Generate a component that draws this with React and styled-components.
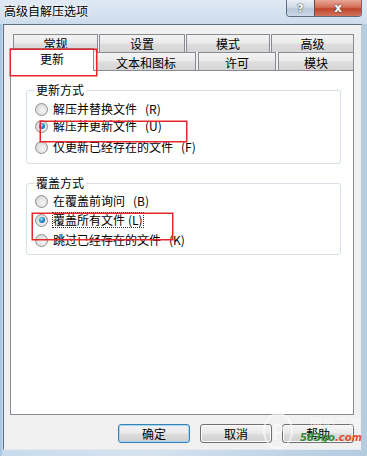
import React from "react";
import styled, { createGlobalStyle } from "styled-components";

const Global = createGlobalStyle`
    html, body {
        margin: 0;
        padding: 0;
        background: #2c3c4a;
    }
    body {
        font-family: "Noto Sans CJK SC", "Liberation Sans", sans-serif;
        font-size: 12px;
        color: #000;
    }
`;

const Window = styled.div`
    position: relative;
    width: 367px;
    height: 456px;
    display: flex;
    flex-direction: column;
    background: linear-gradient(90deg, #9fbfdc 0px, #c9dbec 3px, #d6e3ef 40%, #c4d6e8 70%, #b5cbe0 100%);
    overflow: hidden;
`;

const TitleBar = styled.div`
    height: 24px;
    display: flex;
    justify-content: space-between;
    align-items: flex-start;
    padding-left: 4px;
    padding-right: 5px;
    background: linear-gradient(180deg, #dfe9f4 0%, #cddcec 100%);
`;

const Title = styled.div`
    padding-top: 3px;
    font-size: 12px;
    line-height: 16px;
    color: #000;
    text-shadow: 0 0 6px #fff, 0 0 3px #fff;
`;

const Caption = styled.div`
    display: flex;
    height: 16px;
    border: 1px solid #5a6e85;
    border-top: none;
    border-radius: 0 0 4px 4px;
    overflow: hidden;
`;

const CapButton = styled.div`
    width: ${p => p.$w}px;
    height: 16px;
    display: flex;
    align-items: center;
    justify-content: center;
    font-family: "DejaVu Sans", sans-serif;
    font-weight: bold;
    font-size: ${p => (p.$close ? 12 : 11)}px;
    color: #fff;
    text-shadow: 0 0 1px #333, 0 0 2px #555;
    border-left: ${p => (p.$close ? "1px solid #6b4a4a" : "none")};
    background: ${p =>
        p.$close
            ? "linear-gradient(180deg, #e8a797 0%, #d4705a 45%, #c0432a 55%, #d0755e 100%)"
            : "linear-gradient(180deg, #e9eff6 0%, #cfdbe8 45%, #b8c9dc 55%, #cad8e7 100%)"};
`;

const Client = styled.div`
    flex: 1;
    margin: 0 5px 6px 3px;
    background: #f0f0f0;
    border: 1px solid #5d6f80;
    border-right-color: #b9c8d6;
    border-bottom-color: #e6eaee;
    display: flex;
    flex-direction: column;
    padding: 9px 7px 0 6px;
`;

const Tabs = styled.div`
    position: relative;
    width: 344px;
    display: flex;
    flex-direction: column;
`;

const TabRow = styled.div`
    display: flex;
    align-items: flex-end;
    gap: ${p => p.$gap}px;
    padding-left: ${p => p.$pad}px;
    height: 18px;
`;

const Tab = styled.div`
    width: ${p => p.$w}px;
    height: 18px;
    box-sizing: border-box;
    border: 1px solid #898c95;
    border-bottom: none;
    display: flex;
    align-items: ${p => (p.$back ? "flex-start" : "center")};
    justify-content: center;
    font-size: 12px;
    line-height: 13px;
    padding-top: ${p => (p.$back ? 2 : 1)}px;
    background: linear-gradient(180deg, #f3f3f3 0%, #ebebeb 45%, #dddddd 55%, #d5d5d5 100%);
`;

const ActiveTab = styled(Tab)`
    height: 23px;
    margin-bottom: -1px;
    position: relative;
    z-index: 2;
    background: #fff;
    padding-top: 0;
    padding-bottom: 3px;
`;

const Panel = styled.div`
    height: 345px;
    box-sizing: border-box;
    background: #fff;
    border: 1px solid #898c95;
    padding: 12px 12px 0 15px;
    display: flex;
    flex-direction: column;
    gap: 12px;
`;

const Group = styled.fieldset`
    margin: 0;
    padding: 0 0 0 8px;
    border: 1px solid #d5dfe5;
    border-radius: 3px;
    height: ${p => p.$h}px;
    box-sizing: border-box;
`;

const Legend = styled.legend`
    padding: 0 2px;
    margin-left: -1px;
    font-size: 12px;
    line-height: 14px;
`;

const Option = styled.label`
    display: flex;
    align-items: center;
    gap: 5px;
    height: 14px;
    margin-top: ${p => p.$top}px;
    font-size: 12px;
    line-height: 14px;
    white-space: nowrap;
`;

const Radio = styled.span`
    width: 13px;
    height: 13px;
    flex: none;
    border-radius: 50%;
    border: 1px solid #8e8f8f;
    box-sizing: border-box;
    background: radial-gradient(circle at 60% 60%, #f6f6f6 0%, #e0e0e0 55%, #cbcbcb 100%);
    display: flex;
    align-items: center;
    justify-content: center;
    &::after {
        content: "";
        display: ${p => (p.$on ? "block" : "none")};
        width: 6px;
        height: 6px;
        border-radius: 50%;
        background: radial-gradient(circle at 40% 35%, #9fdcff 0%, #1a7ec8 55%, #0b4f8a 100%);
    }
`;

const Key = styled.span`
    margin-left: 3px;
    font-size: 12px;
`;

const Focus = styled.span`
    outline: 1px dotted #333;
    outline-offset: 0px;
`;

const Buttons = styled.div`
    display: flex;
    justify-content: flex-end;
    gap: 10px;
    width: 344px;
    margin-top: 9px;
`;

const Button = styled.div`
    width: 72px;
    height: 19px;
    box-sizing: border-box;
    border: 1px solid ${p => (p.$default ? "#3c7fb1" : "#707070")};
    box-shadow: ${p => (p.$default ? "inset 0 0 0 1px #9fd7f6" : "inset 0 0 0 1px #fbfbfb")};
    border-radius: 3px;
    display: flex;
    align-items: center;
    justify-content: center;
    font-size: 12px;
    line-height: 14px;
    background: linear-gradient(180deg, #f2f2f2 0%, #ebebeb 45%, #dddddd 55%, #cfcfcf 100%);
`;

const Mark = styled.div`
    position: absolute;
    border: 1px solid #e8262a;
    box-shadow: 0 0 0 0.5px #e8262a;
    pointer-events: none;
    z-index: 5;
`;

const Watermark = styled.div`
    position: absolute;
    right: 5px;
    bottom: 12px;
    z-index: 6;
    display: flex;
    flex-direction: column;
    align-items: flex-end;
    gap: 3px;
    font-family: "DejaVu Sans", sans-serif;
    font-style: italic;
    font-weight: bold;
    line-height: 12px;
    pointer-events: none;
`;

const WmTop = styled.span`
    font-family: "Noto Sans CJK SC", sans-serif;
    font-style: normal;
    font-weight: normal;
    font-size: 12px;
    color: rgba(255, 255, 255, 0.6);
    letter-spacing: 1px;
`;

const WmSite = styled.span`
    font-size: 10px;
    color: #2f8f3a;
    & > em {
        color: #e0502e;
        font-style: italic;
    }
`;

const Logo = () => (
    <svg width="32" height="38" viewBox="0 0 32 38" style={{ position: "absolute", left: 262, top: 412, zIndex: 6 }}>
        <ellipse cx="16" cy="19" rx="14" ry="17" fill="none" stroke="rgba(255,255,255,0.6)" strokeWidth="2" />
        <path d="M13 11 v17 M13 13 h3 a4 4 0 0 1 0 8 h-3" fill="none" stroke="rgba(255,255,255,0.6)" strokeWidth="2" />
    </svg>
);

export default function App() {
    return (
        <Window>
            <Global />
            <TitleBar>
                <Title>高级自解压选项</Title>
                <Caption>
                    <CapButton $w={27}>?</CapButton>
                    <CapButton $w={46} $close>x</CapButton>
                </Caption>
            </TitleBar>
            <Client>
                <Tabs>
                    <TabRow $pad={3} $gap={1}>
                        <Tab $w={85} $back>常规</Tab>
                        <Tab $w={86} $back>设置</Tab>
                        <Tab $w={84} $back>模式</Tab>
                        <Tab $w={83} $back>高级</Tab>
                    </TabRow>
                    <TabRow $pad={0} $gap={2}>
                        <ActiveTab $w={84}>更新</ActiveTab>
                        <Tab $w={100}>文本和图标</Tab>
                        <Tab $w={78}>许可</Tab>
                        <Tab $w={76}>模块</Tab>
                    </TabRow>
                    <Panel>
                        <Group $h={81}>
                            <Legend>更新方式</Legend>
                            <Option $top={5}>
                                <Radio />解压并替换文件<Key>(R)</Key>
                            </Option>
                            <Option $top={3}>
                                <Radio $on />解压并更新文件<Key>(U)</Key>
                            </Option>
                            <Option $top={7}>
                                <Radio />仅更新已经存在的文件<Key>(F)</Key>
                            </Option>
                        </Group>
                        <Group $h={79}>
                            <Legend>覆盖方式</Legend>
                            <Option $top={4}>
                                <Radio />在覆盖前询问<Key>(B)</Key>
                            </Option>
                            <Option $top={5}>
                                <Radio $on />
                                <Focus>覆盖所有文件<Key>(L)</Key></Focus>
                            </Option>
                            <Option $top={6}>
                                <Radio />跳过已经存在的文件<Key>(K)</Key>
                            </Option>
                        </Group>
                    </Panel>
                </Tabs>
                <Buttons>
                    <Button $default>确定</Button>
                    <Button>取消</Button>
                    <Button>帮助</Button>
                </Buttons>
            </Client>
            <Mark style={{ left: 10, top: 49, width: 85, height: 25 }} />
            <Mark style={{ left: 40, top: 121, width: 145, height: 19 }} />
            <Mark style={{ left: 32, top: 213, width: 139, height: 25 }} />
            <Logo />
            <Watermark>
                <WmTop>网吧三国</WmTop>
                <WmSite>583go<em>.com</em></WmSite>
            </Watermark>
        </Window>
    );
}
